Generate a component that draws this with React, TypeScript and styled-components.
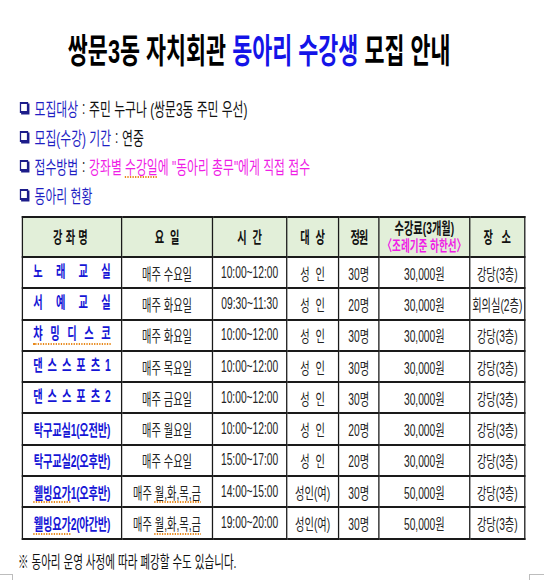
import React from 'react';
import styled, { createGlobalStyle } from 'styled-components';

// the source picture is squeezed horizontally, so the sheet is laid out wide and scaled on x
const SQUEEZE = 0.64;

interface Course {
    name: string;
    day: React.ReactNode;
    time: string;
    target: string;
    seats: string;
    fee: string;
    room: string;
    spread?: boolean;
    squiggle?: boolean;
}

const GlobalStyle = createGlobalStyle`
  html, body {
    margin: 0;
    padding: 0;
    background: #ffffff;
  }
  body {
    font-family: "Liberation Sans", "Noto Sans CJK KR", sans-serif;
  }
`;

const Viewport = styled.div`
  position: relative;
  width: 552px;
  height: 580px;
  overflow: hidden;
  background: #ffffff;
`;

const Sheet = styled.div`
  width: 862px;
  padding-top: 31px;
  transform: scaleX(${SQUEEZE});
  transform-origin: 0 0;
`;

const Title = styled.h1`
  margin: 0 0 0 106px;
  font-size: 34px;
  line-height: 40px;
  font-weight: 700;
  color: #000;
  white-space: nowrap;
`;

const Accent = styled.span`
  color: #1414e8;
`;

const InfoList = styled.div`
  margin-top: 22px;
  padding-left: 31px;
  display: flex;
  flex-direction: column;
`;

const InfoLine = styled.div`
  display: flex;
  align-items: center;
  height: 29px;
  font-size: 18.5px;
  color: #111;
  white-space: nowrap;
`;

const Bullet = styled.span`
  display: inline-block;
  width: 9px;
  height: 7px;
  border: 2px solid #1c1c8a;
  box-shadow: 2px 1.5px 0 #1c1c8a;
  margin-right: 10px;
  flex-shrink: 0;
`;

const Label = styled.span`
  color: #1f1fc4;
`;

const Colon = styled.span`
  color: #222;
  margin: 0 6px;
`;

const Pink = styled.span`
  color: #f01ee6;
`;

const Squiggle = styled.span`
  text-decoration: underline dotted #e8891c;
  text-decoration-thickness: 2px;
  text-underline-offset: 3px;
`;

const Table = styled.table`
  margin: 7px 0 0 34px;
  border-collapse: collapse;
  table-layout: fixed;
  border: 2.5px solid #111;
`;

const HeadRow = styled.tr`
  height: 40px;
  background: #e2efd9;
`;

const BodyRow = styled.tr`
  height: 31.3px;
`;

const Th = styled.th<{ $spacing?: number }>`
  border: 2.5px solid #1a1a1a;
  padding: 0;
  font-size: 16px;
  font-weight: 700;
  color: #111;
  text-align: center;
  white-space: nowrap;
  line-height: 17px;
  letter-spacing: ${p => p.$spacing ?? 0}px;
`;

const Td = styled.td`
  border: 2.5px solid #1a1a1a;
  border-top-color: #333;
  padding: 0;
  font-size: 16px;
  color: #222;
  text-align: center;
  white-space: nowrap;
`;

const NameCell = styled.td`
  border: 2.5px solid #1a1a1a;
  border-top-color: #333;
  padding: 0 16px;
  font-size: 16px;
  font-weight: 700;
  color: #1515d6;
  white-space: nowrap;
`;

const Spread = styled.div<{ $squiggle?: boolean }>`
  display: flex;
  justify-content: space-between;
  line-height: 18px;
  border-bottom: 2px dotted ${p => (p.$squiggle ? '#e8891c' : 'transparent')};
`;

const Packed = styled.div`
  text-align: center;
  letter-spacing: -0.3px;
`;

const FeeNote = styled.span`
  display: block;
  color: #f01ee6;
  font-size: 15px;
`;

const Footnote = styled.p`
  margin: 10px 0 0 28px;
  font-size: 16.5px;
  line-height: 24px;
  color: #111;
  white-space: nowrap;
`;

const CornerMark = styled.div<{ $side: 'left' | 'right' }>`
  position: absolute;
  top: 574px;
  ${p => (p.$side === 'left' ? 'left: 0;' : 'left: 529px;')}
  width: ${p => (p.$side === 'left' ? '12px' : '14px')};
  height: 8px;
  border-top: 1px solid #bdbdbd;
  ${p => (p.$side === 'left' ? 'border-right: 1px solid #bdbdbd;' : 'border-left: 1px solid #bdbdbd;')}
`;

const weekdays = <>매주 <Squiggle>월,화,목,금</Squiggle></>;

const courses: Course[] = [
    { name: '노래교실', day: '매주 수요일', time: '10:00~12:00', target: '성\u00a0\u00a0인', seats: '30명', fee: '30,000원', room: '강당(3층)', spread: true },
    { name: '서예교실', day: '매주 화요일', time: '09:30~11:30', target: '성\u00a0\u00a0인', seats: '20명', fee: '30,000원', room: '회의실(2층)', spread: true },
    { name: '챠밍디스코', day: '매주 화요일', time: '10:00~12:00', target: '성\u00a0\u00a0인', seats: '30명', fee: '30,000원', room: '강당(3층)', spread: true, squiggle: true },
    { name: '댄스스포츠1', day: '매주 목요일', time: '10:00~12:00', target: '성\u00a0\u00a0인', seats: '30명', fee: '30,000원', room: '강당(3층)', spread: true },
    { name: '댄스스포츠2', day: '매주 금요일', time: '10:00~12:00', target: '성\u00a0\u00a0인', seats: '30명', fee: '30,000원', room: '강당(3층)', spread: true },
    { name: '탁구교실1(오전반)', day: '매주 월요일', time: '10:00~12:00', target: '성\u00a0\u00a0인', seats: '20명', fee: '30,000원', room: '강당(3층)' },
    { name: '탁구교실2(오후반)', day: '매주 수요일', time: '15:00~17:00', target: '성\u00a0\u00a0인', seats: '20명', fee: '30,000원', room: '강당(3층)' },
    { name: '웰빙요가1(오후반)', day: weekdays, time: '14:00~15:00', target: '성인(여)', seats: '30명', fee: '50,000원', room: '강당(3층)', squiggle: true },
    { name: '웰빙요가2(야간반)', day: weekdays, time: '19:00~20:00', target: '성인(여)', seats: '30명', fee: '50,000원', room: '강당(3층)', squiggle: true },
];

const columnWidths = [155, 142, 116, 81, 63, 142, 86];

const CourseName: React.FC<{ course: Course }> = ({ course }) => {
    if (course.spread) {
        return (
            <Spread $squiggle={course.squiggle}>
                {course.name.split('').map((ch, i) => <span key={i}>{ch}</span>)}
            </Spread>
        );
    }
    const paren = course.name.indexOf('(');
    const head = course.name.slice(0, paren - 1);
    const rest = course.name.slice(paren - 1);
    return (
        <Packed>
            {course.squiggle ? <Squiggle>{head}</Squiggle> : head}
            {rest}
        </Packed>
    );
};

export default function App() {
    return (
        <Viewport>
            <GlobalStyle />
            <Sheet>
                <Title>
                    쌍문3동 자치회관 <Accent>동아리 수강생</Accent> 모집 안내
                </Title>

                <InfoList>
                    <InfoLine>
                        <Bullet />
                        <Label>모집대상</Label><Colon>:</Colon>주민 누구나 (쌍문3동 주민 우선)
                    </InfoLine>
                    <InfoLine>
                        <Bullet />
                        <Label>모집(수강) 기간</Label><Colon>:</Colon>연중
                    </InfoLine>
                    <InfoLine>
                        <Bullet />
                        <Label>접수방법</Label><Colon>:</Colon>
                        <Pink>강좌별 <Squiggle>수강일</Squiggle>에 "동아리 총무"에게 직접 접수</Pink>
                    </InfoLine>
                    <InfoLine>
                        <Bullet />
                        <Label>동아리 현황</Label>
                    </InfoLine>
                </InfoList>

                <Table>
                    <colgroup>
                        {columnWidths.map((w, i) => <col key={i} style={{ width: w }} />)}
                    </colgroup>
                    <thead>
                        <HeadRow>
                            <Th $spacing={5}>강좌명</Th>
                            <Th>요&nbsp;&nbsp;일</Th>
                            <Th>시&nbsp;&nbsp;간</Th>
                            <Th>대&nbsp;&nbsp;상</Th>
                            <Th $spacing={-2}>정원</Th>
                            <Th>
                                수강료(3개월)
                                <FeeNote>〈조례기준 하한선〉</FeeNote>
                            </Th>
                            <Th>장&nbsp;&nbsp;&nbsp;소</Th>
                        </HeadRow>
                    </thead>
                    <tbody>
                        {courses.map((c, i) => (
                            <BodyRow key={i}>
                                <NameCell><CourseName course={c} /></NameCell>
                                <Td>{c.day}</Td>
                                <Td>{c.time}</Td>
                                <Td>{c.target}</Td>
                                <Td>{c.seats}</Td>
                                <Td>{c.fee}</Td>
                                <Td>{c.room}</Td>
                            </BodyRow>
                        ))}
                    </tbody>
                </Table>

                <Footnote>※ 동아리 운영 사정에 따라 폐강할 수도 있습니다.</Footnote>
            </Sheet>
            <CornerMark $side="left" />
            <CornerMark $side="right" />
        </Viewport>
    );
}
